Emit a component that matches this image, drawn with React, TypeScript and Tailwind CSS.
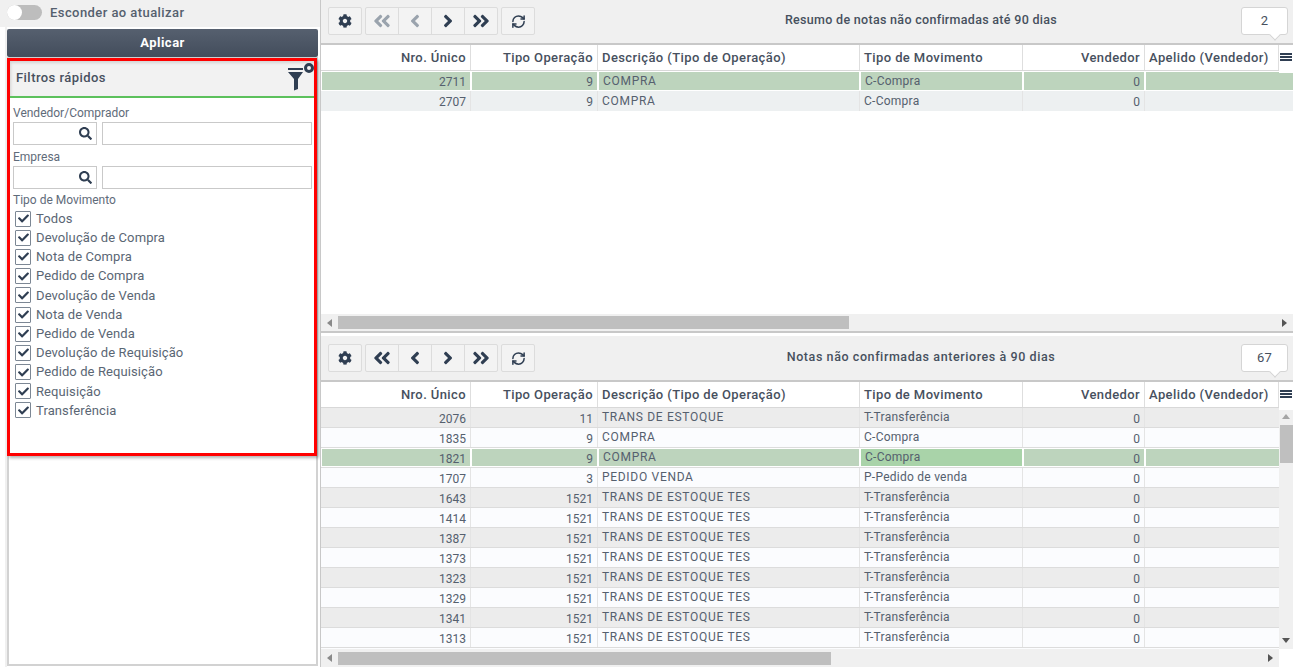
import { RefreshCw } from "lucide-react";
import { FaAngleDoubleLeft, FaAngleDoubleRight, FaAngleLeft, FaAngleRight, FaCheck, FaCog, FaSearch } from "react-icons/fa";

const tipos = [
  "Todos",
  "Devolução de Compra",
  "Nota de Compra",
  "Pedido de Compra",
  "Devolução de Venda",
  "Nota de Venda",
  "Pedido de Venda",
  "Devolução de Requisição",
  "Pedido de Requisição",
  "Requisição",
  "Transferência",
];

const columns = [
  { label: "Nro. Único", width: "w-[150px]", right: true },
  { label: "Tipo Operação", width: "w-[127px]", right: true },
  { label: "Descrição (Tipo de Operação)", width: "w-[262px]", right: false },
  { label: "Tipo de Movimento", width: "w-[163px]", right: false },
  { label: "Vendedor", width: "w-[122px]", right: true },
  { label: "Apelido (Vendedor)", width: "w-[134px]", right: false },
];

type Row = [string, string, string, string];

const topRows: Row[] = [
  ["2711", "9", "COMPRA", "C-Compra"],
  ["2707", "9", "COMPRA", "C-Compra"],
];

const bottomRows: Row[] = [
  ["2076", "11", "TRANS DE ESTOQUE", "T-Transferência"],
  ["1835", "9", "COMPRA", "C-Compra"],
  ["1821", "9", "COMPRA", "C-Compra"],
  ["1707", "3", "PEDIDO VENDA", "P-Pedido de venda"],
  ...["1643", "1414", "1387", "1373", "1323", "1329", "1341", "1313"].map(
    (n): Row => [n, "1521", "TRANS DE ESTOQUE TES", "T-Transferência"],
  ),
];

const Filter = ({ label }: { label: string }) => (
  <div>
    <div className="text-[12px] leading-[14px] text-[#5f6b7a]">{label}</div>
    <div className="mt-[2px] flex gap-[5px]">
      <div className="flex h-[23px] w-[84px] items-center justify-end border border-[#c9c9c9] pr-[4px]">
        <FaSearch size={13} className="text-[#2f3e52]" />
      </div>
      <div className="h-[23px] w-[210px] border border-[#c9c9c9]" />
    </div>
  </div>
);

const ToolButton = ({ children, className = "" }: { children: React.ReactNode; className?: string }) => (
  <div className={`flex items-center justify-center ${className}`}>{children}</div>
);

const Toolbar = ({ title, count, top }: { title: string; count: string; top: boolean }) => {
  const back = top ? "text-[#9aa3ad]" : "text-[#2f3e52]";
  return (
    <div className={`flex items-start bg-[#f0f0f0] pl-[7px] pr-[5px] text-[#2f3e52] ${top ? "h-[43px] pt-[7px]" : "h-[44px] pt-[8px]"}`}>
      <ToolButton className="h-[28px] w-[34px] rounded-[2px] border border-[#dcdcdc] bg-[#f3f3f3]">
        <FaCog size={14} />
      </ToolButton>
      <div className="ml-[3px] flex h-[28px] rounded-[2px] border border-[#dcdcdc] bg-[#f3f3f3]">
        <ToolButton className={`w-[33px] border-r border-[#dcdcdc] ${back}`}>
          <FaAngleDoubleLeft size={20} />
        </ToolButton>
        <ToolButton className={`w-[33px] border-r border-[#dcdcdc] ${back}`}>
          <FaAngleLeft size={20} />
        </ToolButton>
        <ToolButton className="w-[33px] border-r border-[#dcdcdc]">
          <FaAngleRight size={20} />
        </ToolButton>
        <ToolButton className="w-[32px]">
          <FaAngleDoubleRight size={20} />
        </ToolButton>
      </div>
      <ToolButton className="ml-[3px] h-[28px] w-[34px] rounded-[2px] border border-[#dcdcdc] bg-[#f3f3f3]">
        <RefreshCw size={15} strokeWidth={2.4} />
      </ToolButton>
      <div
        className={`flex h-[26px] flex-1 items-center justify-center pl-[66px] text-[12.5px] font-medium text-[#47505e] ${
          top ? "tracking-[0.3px]" : "tracking-[0.58px]"
        }`}
      >
        {title}
      </div>
      <div className="relative flex h-[28px] w-[47px] items-center justify-center rounded-[3px] border border-[#d5d5d5] bg-white text-[13px] tracking-[0.3px] text-[#47505e]">
        {count}
        <div className="absolute bottom-[-5px] right-[8px] h-[8px] w-[8px] rotate-45 border-b border-r border-[#d5d5d5] bg-white" />
      </div>
    </div>
  );
};

const GridHeader = () => (
  <div className="relative flex h-[28px] border-b border-t-2 border-b-[#d8d8d8] border-t-[#c8c8c8] bg-white">
    {columns.map((c) => (
      <div
        key={c.label}
        className={`flex ${c.width} items-center whitespace-nowrap border-r border-[#dedede] px-[4px] text-[13px] font-medium tracking-[0.4px] text-[#47505e] ${
          c.right ? "justify-end" : ""
        }`}
      >
        {c.label}
      </div>
    ))}
    <div className="relative z-10 -mb-[3px] flex w-[14px] flex-col gap-[1px] bg-white pl-[1px] pt-[8px]">
      <div className="h-[2px] w-[12px] bg-[#2f3e52]" />
      <div className="h-[2px] w-[12px] bg-[#2f3e52]" />
      <div className="h-[2px] w-[12px] bg-[#2f3e52]" />
    </div>
  </div>
);

const GridRow = ({ row, bg, selected, accent }: { row: Row; bg: string; selected?: boolean; accent?: boolean }) => {
  const cells = [row[0], row[1], row[2], row[3], "0", ""];
  const track = ["", "", "tracking-[0.7px]", "tracking-[0.25px]", "", ""];
  return (
    <div className={`flex h-full text-[12px] text-[#55606e] ${selected ? "bg-white" : bg}`}>
      {cells.map((text, i) => (
        <div
          key={columns[i].label}
          className={`flex ${columns[i].width} items-center whitespace-nowrap px-[4px] ${track[i]} ${
            selected ? `my-[1px] border-l border-white ${i < 5 ? "border-r" : ""}` : i < 5 ? "border-r border-[#e4e4e4]" : ""
          } ${selected ? (accent && i === 3 ? "bg-[#a9d3a9]" : "bg-[#bdd4bd]") : ""} ${
            columns[i].right ? "justify-end pt-[2px]" : "pb-[1px]"
          }`}
        >
          {text}
        </div>
      ))}
      <div className={`flex-1 ${selected ? "my-[1px] bg-[#bdd4bd]" : ""}`} />
    </div>
  );
};

const HScroll = ({ thumb }: { thumb: string }) => (
  <div className="flex h-full items-center bg-[#f0f0f0]">
    <div className="ml-[6px] h-0 w-0 border-y-[4px] border-r-[5px] border-y-transparent border-r-[#8a8a8a]" />
    <div className={`ml-[6px] h-[13px] ${thumb} bg-[#bfbfbf]`} />
    <div className="ml-auto mr-[6px] h-0 w-0 border-y-[4px] border-l-[5px] border-y-transparent border-l-[#555555]" />
  </div>
);

export default function App() {
  return (
    <div className="flex h-[667px] w-[1293px] overflow-hidden bg-white font-['Roboto',sans-serif]">
      <aside className="flex w-[320px] shrink-0 flex-col">
        <div className="flex h-[27px] shrink-0 items-center bg-[#f0f0f0] pb-[2px] pl-[7px]">
          <div className="relative h-[15px] w-[35px] rounded-full bg-[#bdbdbd]">
            <div className="absolute left-0 top-0 h-[15px] w-[15px] rounded-full bg-white" />
          </div>
          <span className="ml-[8px] text-[13px] font-medium tracking-[0.43px] text-[#55606e]">Esconder ao atualizar</span>
        </div>
        <div className="ml-[5px] flex flex-1 border-l-2 border-[#f0f0f0] pb-[1px] pr-[2px]">
          <div className="flex min-w-0 flex-1 flex-col">
            <div className="mt-[2px] flex h-[28px] shrink-0 items-center justify-center rounded-[2px] bg-gradient-to-b from-[#56606f] to-[#434d5c] text-[13px] font-bold tracking-[0.5px] text-white">
              Aplicar
            </div>
            <div className="flex-1 border-2 border-[#d2d2d2]">
              <div className="-ml-[2px] -mt-[1px] h-[398px] w-[310px] border-[3px] border-[#ff0000] shadow-[2px_2px_3px_rgba(0,0,0,0.3)]">
                <div className="flex h-[37px] items-center justify-between border-b-2 border-[#5cc15c] bg-[#f2f2f2] pl-[6px] shadow-[inset_1px_2px_3px_rgba(0,0,0,0.12)]">
                  <span className="pb-[2px] text-[13px] font-medium tracking-[0.45px] text-[#47505e]">Filtros rápidos</span>
                  <svg width="29" height="30" viewBox="0 0 29 30" className="-mr-[1px] -mt-[2px]">
                    <rect x="2" y="5" width="15" height="2" fill="#2f3e52" />
                    <path d="M2 9h15l-5 7v10l-4 1.5V16z" fill="#2f3e52" />
                    <circle cx="23" cy="5" r="3.5" fill="#f2f2f2" stroke="#2f3e52" strokeWidth="3" />
                  </svg>
                </div>
                <div className="flex flex-col gap-[5px] pl-[3px] pt-[8px]">
                  <Filter label="Vendedor/Comprador" />
                  <Filter label="Empresa" />
                </div>
                <div className="pl-[3px] pt-[4px] text-[12px] leading-[14px] text-[#5f6b7a]">Tipo de Movimento</div>
                <div className="pl-[5px] pt-[2px]">
                  {tipos.map((t) => (
                    <div key={t} className="flex h-[19.2px] items-center">
                      <div className="flex h-[16px] w-[16px] items-center justify-center rounded-[1px] border border-[#7c8794] bg-white">
                        <FaCheck size={11} className="text-[#2f3e52]" />
                      </div>
                      <span className="ml-[5px] text-[13px] tracking-[0.1px] text-[#5a6674]">{t}</span>
                    </div>
                  ))}
                </div>
              </div>
            </div>
          </div>
        </div>
      </aside>

      <main className="flex min-w-0 flex-1 flex-col border-l-[1px] border-[#c8c8c8]">
        <div className="flex h-[333px] shrink-0 flex-col border-b-2 border-[#c8c8c8]">
          <Toolbar title="Resumo de notas não confirmadas até 90 dias" count="2" top />
          <GridHeader />
          <div className="flex-1 bg-white">
            <div className="h-[20px]">
              <GridRow row={topRows[0]} bg="" selected />
            </div>
            <div className="h-[20px]">
              <GridRow row={topRows[1]} bg="bg-[#edf0f1]" />
            </div>
          </div>
          <div className="h-[17px] shrink-0">
            <HScroll thumb="w-[511px]" />
          </div>
        </div>

        <div className="h-[3px] shrink-0 bg-white" />
        <Toolbar title="Notas não confirmadas anteriores à 90 dias" count="67" top={false} />
        <GridHeader />
        <div className="relative flex-1 overflow-hidden bg-[#fcfdff]">
          {bottomRows.map((row, i) => (
            <div key={row[0]} className="h-[20px] border-b border-[#dcdcdc]">
              <GridRow row={row} bg={i % 2 === 0 ? "bg-[#ececec]" : "bg-[#fbfcfe]"} selected={i === 2} accent={i === 2} />
            </div>
          ))}
          <div className="absolute bottom-0 right-0 top-0 flex w-[14px] flex-col items-center bg-[#f0f0f0] pt-[6px]">
            <div className="h-0 w-0 border-x-[4px] border-b-[5px] border-x-transparent border-b-[#a5a5a5]" />
            <div className="mt-[6px] h-[38px] w-[13px] bg-[#bfbfbf]" />
            <div className="mb-[6px] mt-auto h-0 w-0 border-x-[4px] border-t-[5px] border-x-transparent border-t-[#555555]" />
          </div>
        </div>
        <div className="flex h-[18px] shrink-0">
          <div className="w-[958px]">
            <HScroll thumb="w-[493px]" />
          </div>
          <div className="w-[14px] bg-white" />
        </div>
      </main>
    </div>
  );
}
